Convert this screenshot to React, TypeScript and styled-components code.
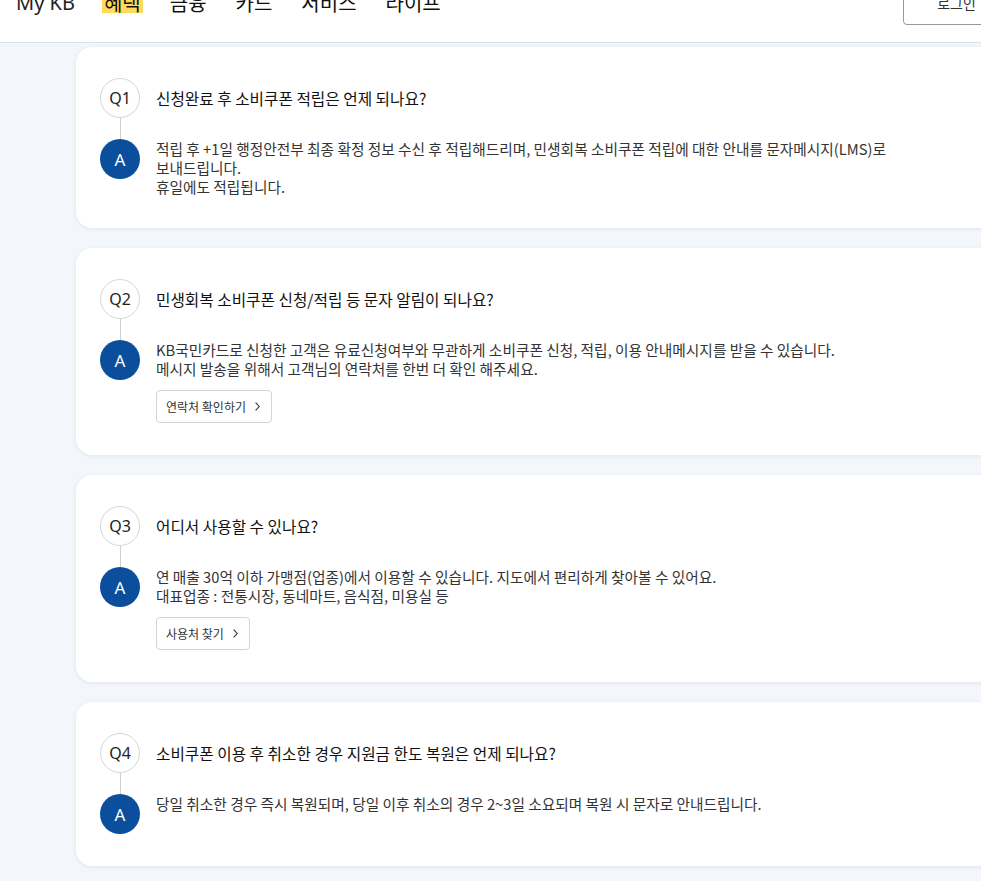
import styled, { createGlobalStyle } from 'styled-components'

const GlobalStyle = createGlobalStyle`
  html,
  body {
    margin: 0;
    padding: 0;
    overflow: hidden;
    background: #f3f6fb;
    font-family: 'Noto Sans CJK KR', 'Noto Sans', sans-serif;
    color: #222;
  }

  * {
    box-sizing: border-box;
  }
`

const Header = styled.header`
  align-items: center;
  background: #fff;
  border-bottom: 1px solid #dde2ea;
  display: flex;
  height: 80px;
  margin-top: -37px;
  padding: 0 0 0 16px;
  width: 1010px;
`

const Logo = styled.div`
  font-family: 'Noto Sans', 'Noto Sans CJK KR', sans-serif;
  font-size: 20px;
  line-height: 20px;
  margin-right: 27px;
`

const Nav = styled.nav`
  display: flex;
  gap: 25px;
`

const NavItem = styled.a<{ $active?: boolean }>`
  background: ${(p) => (p.$active ? '#ffd95a' : 'transparent')};
  color: #111;
  display: block;
  font-size: 20px;
  height: 20px;
  line-height: 20px;
  padding: 0 2px;
  text-decoration: none;
`

const LoginButton = styled.button`
  background: #fff;
  border: 1px solid #999;
  border-radius: 4px;
  color: #333;
  font-family: inherit;
  font-size: 14px;
  height: 44px;
  margin-left: auto;
  width: 107px;
`

const Main = styled.main`
  display: flex;
  flex-direction: column;
  gap: 20px;
  padding: 4px 0 40px 76px;
`

const Card = styled.section`
  background: #fff;
  border-radius: 16px;
  box-shadow: 0 1px 4px rgba(20, 40, 80, 0.08);
  display: grid;
  grid-template-columns: 40px 1fr;
  grid-template-rows: 40px 21px auto;
  column-gap: 16px;
  padding: 31px 32px 32px 24px;
  width: 1100px;
`

const QBadge = styled.div`
  align-items: center;
  background: #fff;
  border: 1px solid #d6d6d6;
  border-radius: 50%;
  color: #222;
  display: flex;
  font-family: 'Noto Sans', sans-serif;
  font-size: 16px;
  grid-column: 1;
  grid-row: 1;
  height: 40px;
  justify-content: center;
`

const Connector = styled.div`
  background: #d0d0d0;
  grid-column: 1;
  grid-row: 2;
  justify-self: center;
  width: 1px;
`

const ABadge = styled.div`
  align-items: center;
  align-self: start;
  background: #0b4f9c;
  border-radius: 50%;
  color: #fff;
  display: flex;
  font-family: 'Noto Sans', sans-serif;
  font-size: 17px;
  grid-column: 1;
  grid-row: 3;
  height: 40px;
  justify-content: center;
`

const Question = styled.h3`
  align-self: center;
  color: #111;
  font-size: 15.7px;
  font-weight: 400;
  grid-column: 2;
  grid-row: 1;
  margin: 0;
`

const Answer = styled.div`
  grid-column: 2;
  grid-row: 3;
`

const AnswerText = styled.p`
  color: #333;
  font-size: 14.7px;
  line-height: 19px;
  margin: 0;
  white-space: nowrap;
`

const LinkButton = styled.button`
  align-items: center;
  background: #fff;
  border: 1px solid #d4d4d4;
  border-radius: 4px;
  color: #333;
  display: inline-flex;
  font-family: inherit;
  font-size: 12px;
  gap: 9px;
  height: 33px;
  margin-top: 12px;
  padding: 0 11px 0 9px;
`

const Chevron = () => (
  <svg width="5" height="9" viewBox="0 0 5 9" fill="none">
    <path d="M0.6 0.6L4.2 4.5L0.6 8.4" stroke="#333" strokeWidth="1.1" />
  </svg>
)

type Faq = {
  no: number
  question: string
  answer: string[]
  link?: string
}

const faqs: Faq[] = [
  {
    no: 1,
    question: '신청완료 후 소비쿠폰 적립은 언제 되나요?',
    answer: [
      '적립 후 +1일 행정안전부 최종 확정 정보 수신 후 적립해드리며, 민생회복 소비쿠폰 적립에 대한 안내를 문자메시지(LMS)로',
      '보내드립니다.',
      '휴일에도 적립됩니다.',
    ],
  },
  {
    no: 2,
    question: '민생회복 소비쿠폰 신청/적립 등 문자 알림이 되나요?',
    answer: [
      'KB국민카드로 신청한 고객은 유료신청여부와 무관하게 소비쿠폰 신청, 적립, 이용 안내메시지를 받을 수 있습니다.',
      '메시지 발송을 위해서 고객님의 연락처를 한번 더 확인 해주세요.',
    ],
    link: '연락처 확인하기',
  },
  {
    no: 3,
    question: '어디서 사용할 수 있나요?',
    answer: [
      '연 매출 30억 이하 가맹점(업종)에서 이용할 수 있습니다. 지도에서 편리하게 찾아볼 수 있어요.',
      '대표업종 : 전통시장, 동네마트, 음식점, 미용실 등',
    ],
    link: '사용처 찾기',
  },
  {
    no: 4,
    question: '소비쿠폰 이용 후 취소한 경우 지원금 한도 복원은 언제 되나요?',
    answer: ['당일 취소한 경우 즉시 복원되며, 당일 이후 취소의 경우 2~3일 소요되며 복원 시 문자로 안내드립니다.'],
  },
]

const navItems = ['혜택', '금융', '카드', '서비스', '라이프']

export default function App() {
  return (
    <>
      <GlobalStyle />
      <Header>
        <Logo>My KB</Logo>
        <Nav>
          {navItems.map((item, i) => (
            <NavItem key={item} href="#" $active={i === 0}>
              {item}
            </NavItem>
          ))}
        </Nav>
        <LoginButton>로그인</LoginButton>
      </Header>

      <Main>
        {faqs.map((faq) => (
          <Card key={faq.no}>
            <QBadge>Q{faq.no}</QBadge>
            <Question>{faq.question}</Question>
            <Connector />
            <ABadge>A</ABadge>
            <Answer>
              <AnswerText>
                {faq.answer.map((line, i) => (
                  <span key={i}>
                    {i > 0 && <br />}
                    {line}
                  </span>
                ))}
              </AnswerText>
              {faq.link && (
                <LinkButton>
                  {faq.link}
                  <Chevron />
                </LinkButton>
              )}
            </Answer>
          </Card>
        ))}
      </Main>
    </>
  )
}
